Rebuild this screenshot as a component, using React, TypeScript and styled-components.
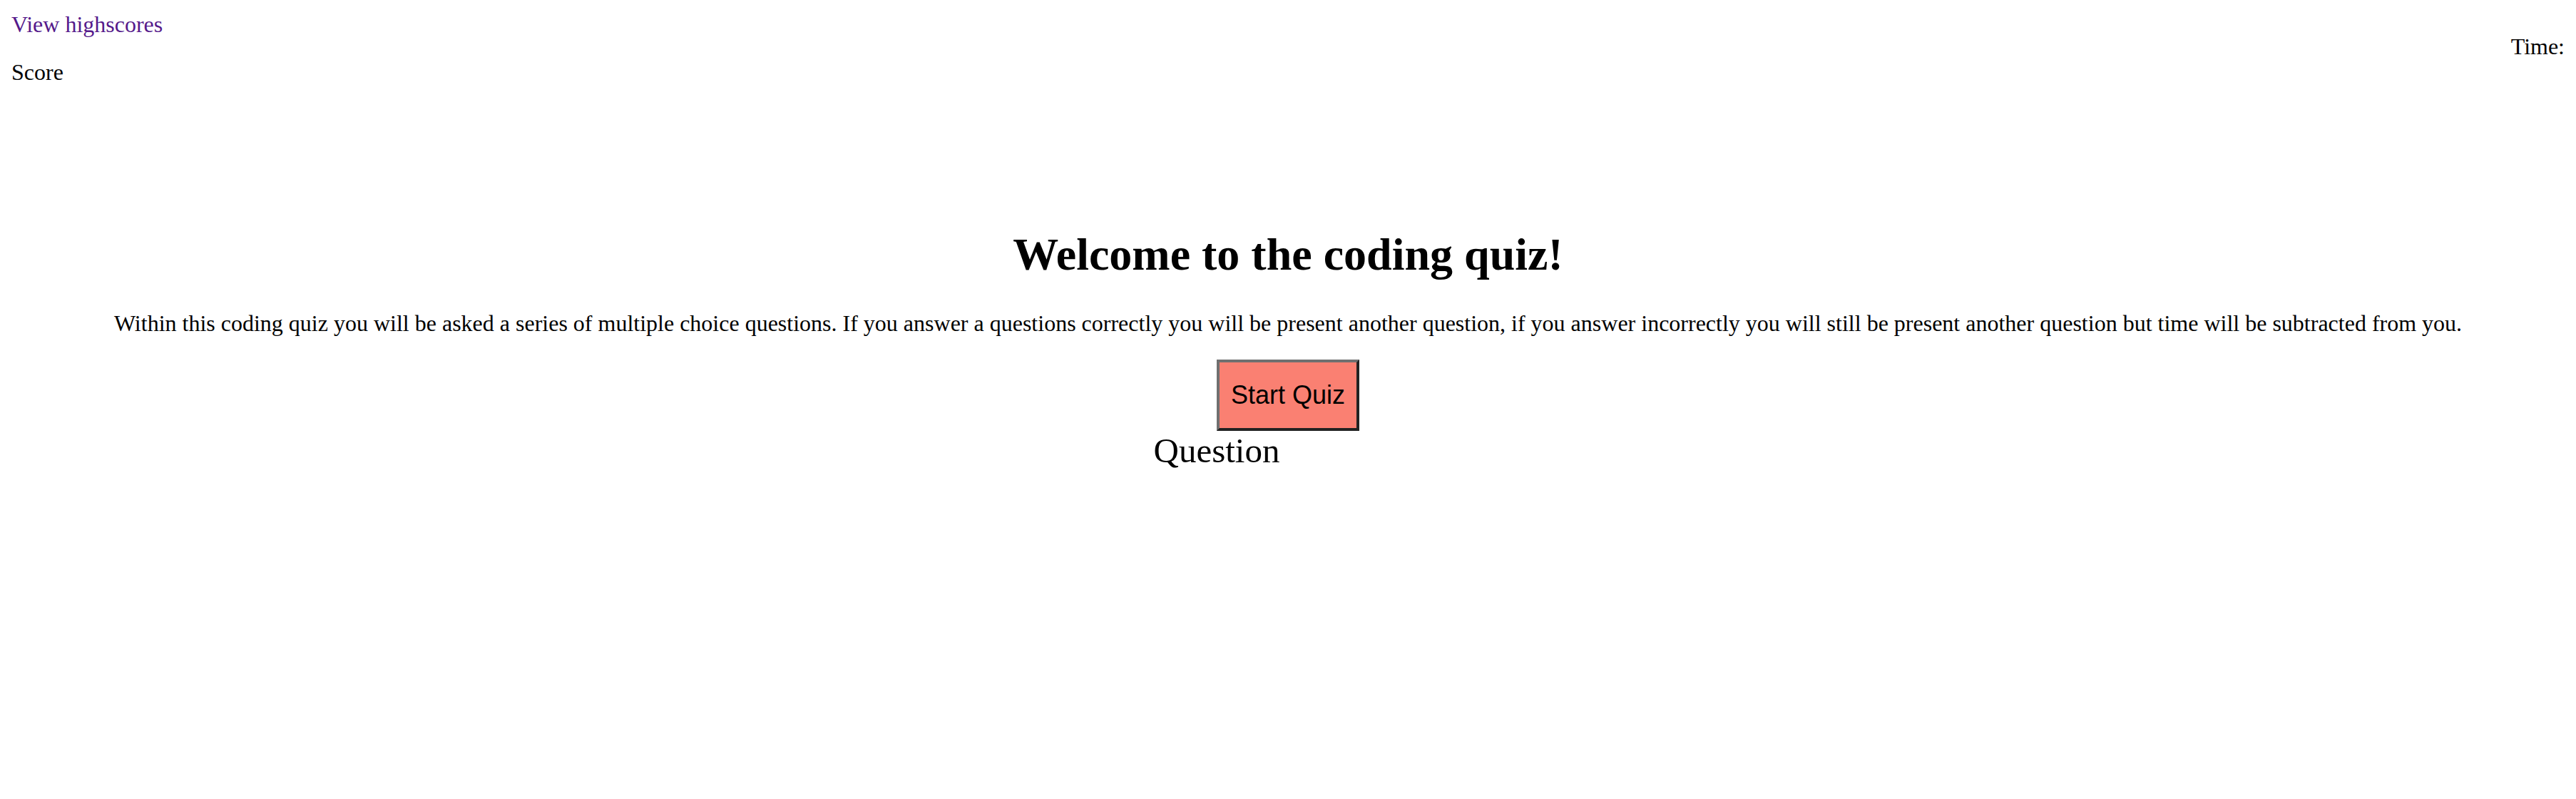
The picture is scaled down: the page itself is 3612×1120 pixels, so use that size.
import React from "react";
import styled, { createGlobalStyle } from "styled-components";

const GlobalStyle = createGlobalStyle`
  html, body {
    margin: 0;
    padding: 0;
    background: #ffffff;
  }
  body {
    font-family: "Liberation Serif", "Times New Roman", serif;
    color: #000000;
  }
`;

const Page = styled.div`
  padding: 16px;
  font-family: "Liberation Serif", "Times New Roman", serif;
`;

const Header = styled.header`
  display: flex;
  justify-content: space-between;
  align-items: flex-start;
`;

const LeftColumn = styled.div`
  display: flex;
  flex-direction: column;
  align-items: flex-start;
`;

const HighscoresLink = styled.a`
  font-size: 32px;
  line-height: 36px;
  color: #551a8b;
  text-decoration: none;
  cursor: pointer;
`;

const ScoreLabel = styled.div`
  margin-top: 31px;
  font-size: 32px;
  line-height: 36px;
`;

const Timer = styled.div`
  margin-top: 31px;
  font-size: 32px;
  line-height: 36px;
`;

const Intro = styled.main`
  margin-top: 201px;
  display: flex;
  flex-direction: column;
  align-items: stretch;
`;

const Title = styled.h1`
  margin: 0;
  font-size: 64px;
  line-height: 74px;
  font-weight: 700;
  text-align: center;
`;

const Description = styled.p`
  margin: 41px 0 0;
  font-size: 32px;
  line-height: 36px;
  text-align: center;
`;

const ButtonRow = styled.div`
  margin-top: 33px;
  display: flex;
  justify-content: center;
`;

const StartButton = styled.button`
  box-sizing: border-box;
  width: 200px;
  height: 100px;
  padding: 0;
  background: #fa8072;
  border-width: 4px;
  border-style: solid;
  border-color: #707070 #222222 #222222 #707070;
  font-family: "Liberation Sans", Arial, sans-serif;
  font-size: 36px;
  line-height: 40px;
  color: #000000;
  cursor: pointer;
`;

const QuestionTitle = styled.div`
  padding-right: 200px;
  font-size: 49px;
  line-height: 55px;
  text-align: center;
`;

export default function App() {
  return (
    <>
      <GlobalStyle />
      <Page>
        <Header>
          <LeftColumn>
            <HighscoresLink href="#">View highscores</HighscoresLink>
            <ScoreLabel>Score</ScoreLabel>
          </LeftColumn>
          <Timer>Time:</Timer>
        </Header>
        <Intro>
          <Title>Welcome to the coding quiz!</Title>
          <Description>
            Within this coding quiz you will be asked a series of multiple choice questions. If you answer a
            questions correctly you will be present another question, if you answer incorrectly you will still be
            present another question but time will be subtracted from you.
          </Description>
          <ButtonRow>
            <StartButton>Start Quiz</StartButton>
          </ButtonRow>
          <QuestionTitle>Question</QuestionTitle>
        </Intro>
      </Page>
    </>
  );
}
